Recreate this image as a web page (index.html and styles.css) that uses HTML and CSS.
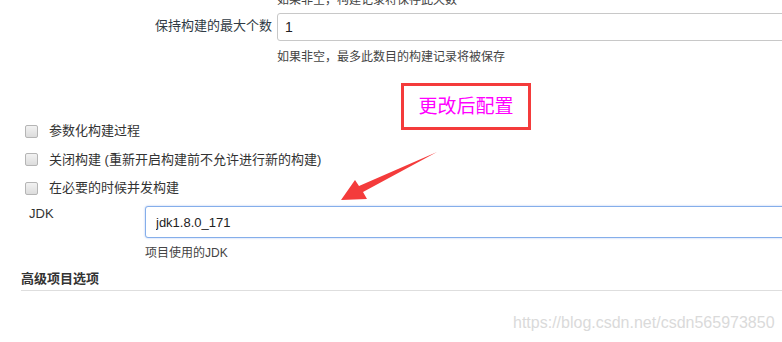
FILE: index.html
```html
<!DOCTYPE html>
<html lang="zh-CN">
<head>
  <meta charset="UTF-8" />
  <title>JDK 配置</title>
  <link rel="stylesheet" href="styles.css">
</head>
<body>

  <div class="form">
    <p class="help top-help">如果非空，构建记录将保存此天数</p>

    <div class="row">
      <label class="label right">保持构建的最大个数</label>
      <div class="field"><input class="input" type="text" value="1"></div>
    </div>
    <p class="help">如果非空，最多此数目的构建记录将被保存</p>

    <div class="checks">
      <div class="check"><span class="box"></span>参数化构建过程</div>
      <div class="check"><span class="box"></span>关闭构建 (重新开启构建前不允许进行新的构建)</div>
      <div class="check"><span class="box"></span>在必要的时候并发构建</div>
    </div>

    <div class="row jdk-row">
      <label class="label jdk-label">JDK</label>
      <div class="field"><input class="input focus" type="text" value="jdk1.8.0_171"></div>
    </div>
    <p class="help jdk-help">项目使用的JDK</p>

    <h3 class="section">高级项目选项</h3>
  </div>

  <!-- annotation drawn over the screenshot -->
  <div class="note">更改后配置</div>
  <svg class="arrow" width="782" height="342" viewBox="0 0 782 342">
    <polygon points="341,200 355,180 359,186 437,152 363,192 367,199" fill="#f43b3b" />
  </svg>

  <div class="watermark">https://blog.csdn.net/csdn565973850</div>

</body>
</html>
```

FILE: styles.css
```css
body {
  margin: 0;
  font-family: "Liberation Sans", "Noto Sans CJK SC", sans-serif;
  font-size: 13px;
  color: #333;
  background: #fff;
  overflow: hidden;
  position: relative;
  width: 782px;
  height: 342px;
}
.help {
  margin: 8px 0 0 277px;
  font-size: 12px;
  line-height: 16px;
  color: #444;
}
.top-help {
  margin-top: -8px;
}
.row {
  display: flex;
  align-items: flex-start;
  margin-top: 5px;
}
.label {
  line-height: 22px;
  padding-top: 2px;
}
.label.right {
  width: 272px;
  padding-right: 5px;
  text-align: right;
  color: #2f3a44;
}
.field {
  flex: 1;
  margin-right: -12px;
}
.input {
  display: block;
  box-sizing: border-box;
  width: 100%;
  height: 28px;
  padding: 0 7px;
  border: 1px solid #c8c8c8;
  border-radius: 3px;
  font-family: inherit;
  font-size: 14px;
  color: #222;
  outline: none;
}
.input.focus {
  height: 32px;
  padding: 0 10px;
  font-size: 13px;
  border-color: #85aeea;
  box-shadow: 0 0 2px rgba(102, 150, 233, 0.6);
}
.checks {
  margin-top: 56px;
  display: flex;
  flex-direction: column;
  gap: 8.5px;
}
.check {
  display: flex;
  align-items: center;
  line-height: 20px;
  padding-left: 25px;
  color: #333;
}
.box {
  width: 11px;
  height: 11px;
  margin-right: 11px;
  border: 1px solid #b5b5b5;
  border-radius: 2px;
  background: linear-gradient(#f2f2f2, #dcdcdc);
}
.jdk-row {
  margin-top: 8px;
}
.jdk-label {
  width: 116px;
  padding-left: 29px;
  padding-top: 0;
  line-height: 16px;
  color: #333;
}
.jdk-help {
  margin: 7px 0 0 145px;
}
.section {
  margin: 9px 0 0 21px;
  padding-bottom: 2px;
  font-size: 13px;
  line-height: 18px;
  font-weight: bold;
  color: #333;
  border-bottom: 1px solid #dedede;
}
.note {
  position: absolute;
  left: 401px;
  top: 83px;
  width: 124px;
  height: 41px;
  border: 3px solid #f43b3b;
  color: #f0f;
  font-size: 19px;
  line-height: 41px;
  text-align: center;
}
.arrow {
  position: absolute;
  left: 0;
  top: 0;
}
.watermark {
  position: absolute;
  left: 513px;
  top: 313px;
  font-size: 16px;
  line-height: 20px;
  color: #dadada;
}
```
